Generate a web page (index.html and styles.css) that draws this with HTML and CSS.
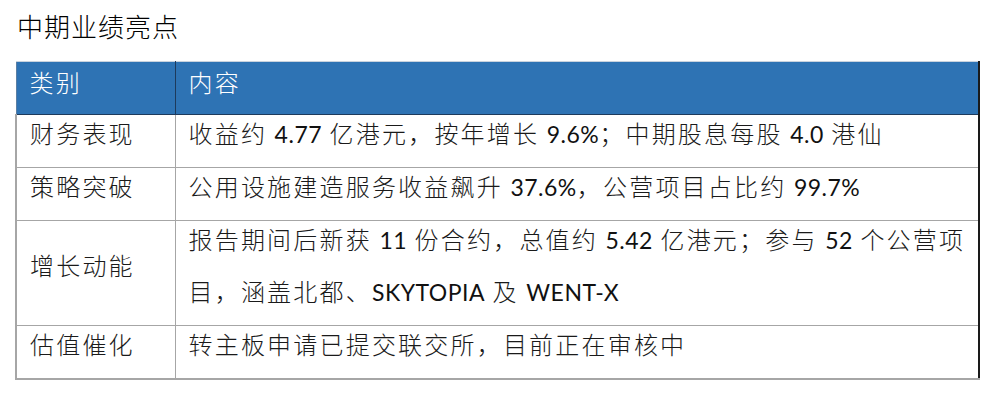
FILE: index.html
```html
<!DOCTYPE html>
<html lang="zh-CN">
<head>
<meta charset="utf-8">
<title>中期业绩亮点</title>
<link rel="stylesheet" href="styles.css">
</head>
<body>
<div class="page">
  <h1 class="title">中期业绩亮点</h1>
  <table class="hl">
    <colgroup><col class="c1"><col class="c2"></colgroup>
    <thead>
      <tr><th><div class="t">类别</div></th><th><div class="t">内容</div></th></tr>
    </thead>
    <tbody>
      <tr><td><div class="t">财务表现</div></td><td><div class="t">收益约 <span class="n">4.77</span> 亿港元<span class="p">，</span>按年增长 <span class="n">9.6%</span><span class="p">；</span>中期股息每股 <span class="n">4.0</span> 港仙</div></td></tr>
      <tr><td><div class="t">策略突破</div></td><td><div class="t">公用设施建造服务收益飙升 <span class="n">37.6%</span><span class="p">，</span>公营项目占比约 <span class="n">99.7%</span></div></td></tr>
      <tr><td><div class="t">增长动能</div></td><td><div class="t">报告期间后新获 <span class="n">11</span> 份合约<span class="p">，</span>总值约 <span class="n">5.42</span> 亿港元<span class="p">；</span>参与 <span class="n">52</span> 个公营项目<span class="p">，</span>涵盖北都<span class="p">、</span><span class="n">SKYTOPIA</span> 及 <span class="n">WENT-X</span></div></td></tr>
      <tr><td><div class="t">估值催化</div></td><td><div class="t">转主板申请已提交联交所<span class="p">，</span>目前正在审核中</div></td></tr>
    </tbody>
  </table>
</div>
</body>
</html>
```
FILE: styles.css
```css
html, body {
  margin: 0;
  padding: 0;
  background: #ffffff;
}
body {
  font-family: "Noto Sans CJK SC", "Noto Sans", sans-serif;
  color: #222;
}
.page {
  padding: 6px 22px 0 15px;
}
.title {
  margin: 0 0 15px 2px;
  font-size: 26px;
  font-weight: 300;
  line-height: 40px;
  letter-spacing: 1px;
  color: #000;
}
.hl {
  border-collapse: collapse;
  width: 963px;
  table-layout: fixed;
}
.c1 { width: 159px; }
.c2 { width: 804px; }
.hl th, .hl td {
  text-align: left;
  vertical-align: middle;
  padding: 0 4px 0 13px;
  font-size: 24px;
  line-height: 52px;
  letter-spacing: 2.2px;
}
.hl td + td, .hl th + th {
  padding-left: 13px;
}
.hl td {
  border: 1px solid #a6a6a6;
  font-weight: 300;
  color: #1a1a1a;
}
.hl td:first-child {
  border-left: 2px solid #a6a6a6;
}
.hl td:last-child {
  border-right: 2px solid #1a1a1a;
}
.hl tbody tr:last-child td {
  border-bottom: 2px solid #a6a6a6;
}
.hl th {
  background: #2e73b4;
  color: #ffffff;
  font-weight: 300;
  border: 1px solid #1d3a5c;
  border-top-color: #c9d3de;
}
.hl th:first-child {
  border-left-color: #5b7fa3;
}
.hl th:last-child {
  border-right: 2px solid #1a1a1a;
}
.t {
  margin: -8px 0 8px;
}
.hl th .t {
  margin: -6px 0 6px;
}
.n {
  font-family: "Lato", "Noto Sans", sans-serif;
  font-weight: 400;
  font-size: 23px;
  line-height: 1;
  letter-spacing: 0.5px;
  color: #111;
}
.p {
  font-family: "Noto Sans CJK TC", "Noto Sans CJK SC", sans-serif;
  line-height: 1;
}
```
